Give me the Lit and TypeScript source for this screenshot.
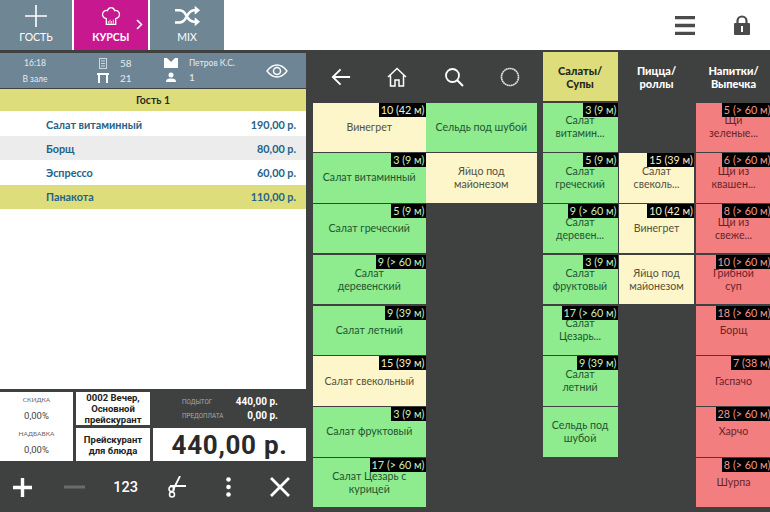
import { LitElement, html, css, svg } from "lit";
import { customElement } from "lit/decorators.js";

type Tone = "g" | "c" | "r";
type Tile = { t: string; b: string; k: Tone } | null;

const col1: Tile[] = [
  { t: "Винегрет", b: "10 (42 м)", k: "c" },
  { t: "Салат витаминный", b: "3 (9 м)", k: "g" },
  { t: "Салат гречеcкий", b: "5 (9 м)", k: "g" },
  { t: "Салат\nдеревенский", b: "9 (> 60 м)", k: "g" },
  { t: "Салат летний", b: "9 (39 м)", k: "g" },
  { t: "Салат свекольный", b: "15 (39 м)", k: "c" },
  { t: "Салат фруктовый", b: "3 (9 м)", k: "g" },
  { t: "Салат Цезарь с\nкурицей", b: "17 (> 60 м)", k: "g" },
];
const col2: Tile[] = [
  { t: "Сельдь под шубой", b: "", k: "g" },
  { t: "Яйцо под\nмайонезом", b: "", k: "c" },
];
const col3: Tile[] = [
  { t: "Салат\nвитамин...", b: "3 (9 м)", k: "g" },
  { t: "Салат\nгреческий", b: "5 (9 м)", k: "g" },
  { t: "Салат\nдеревен...", b: "9 (> 60 м)", k: "g" },
  { t: "Салат\nфруктовый", b: "3 (9 м)", k: "g" },
  { t: "Салат\nЦезарь...", b: "17 (> 60 м)", k: "g" },
  { t: "Салат\nлетний", b: "9 (39 м)", k: "g" },
  { t: "Сельдь под\nшубой", b: "", k: "g" },
];
const col4: Tile[] = [
  null,
  { t: "Салат\nсвеколь...", b: "15 (39 м)", k: "c" },
  { t: "Винегрет", b: "10 (42 м)", k: "c" },
  { t: "Яйцо под\nмайонезом", b: "", k: "c" },
];
const col5: Tile[] = [
  { t: "Щи\nзеленые...", b: "5 (> 60 м)", k: "r" },
  { t: "Щи из\nквашен...", b: "6 (> 60 м)", k: "r" },
  { t: "Щи из\nсвеже...", b: "8 (> 60 м)", k: "r" },
  { t: "Грибной\nсуп", b: "10 (> 60 м)", k: "r" },
  { t: "Борщ", b: "18 (> 60 м)", k: "r" },
  { t: "Гаспачо", b: "7 (38 м)", k: "r" },
  { t: "Харчо", b: "28 (> 60 м)", k: "r" },
  { t: "Шурпа", b: "8 (> 60 м)", k: "r" },
];
const orders = [
  { n: "Салат витаминный", p: "190,00 р.", c: "" },
  { n: "Борщ", p: "80,00 р.", c: "alt" },
  { n: "Эспрессо", p: "60,00 р.", c: "" },
  { n: "Панакота", p: "110,00 р.", c: "sel" },
];

const ico = {
  plusThin: svg`<path d="M11 0v22M0 11h22" stroke="#fff" stroke-width="1.600" fill="none"/>`,
  hat: svg`<path d="M8 19.500C3.500 18.500 1.500 15 2.500 11.500 3.500 8 7 6.500 9.500 7.500 11 4 13.500 3 15 3s4.500 1 5.500 4.500C23 6.500 26.500 8 27.500 11.500 28.500 15 26.500 18.500 22 19.500V28H8Z" fill="none" stroke="#fff" stroke-width="2"/><path d="M11 27v-4M13.500 27v-6M16 27v-4M18.500 27v-6" stroke="#fff" stroke-width="1.200"/>`,
  shuffle: svg`<path d="M1 7h6c5 0 7 3 9 7s5 8 10 8h3M1 23h6c5 0 7-3 9-7s5-9 10-9h3" fill="none" stroke="#fff" stroke-width="3.400"/><path d="M27 1l7 6-7 6zM27 16l7 6-7 6z" fill="#fff"/>`,
};

@customElement("app-root")
export class AppRoot extends LitElement {
  static styles = css`
    :host { display: block; width: 770px; height: 512px; overflow: hidden; background: #3f4040; font-family: "Lato", "Open Sans", sans-serif; }
    svg { display: block; }
    .top { height: 50px; background: #fff; display: flex; align-items: stretch; }
    .tab { background: #6f8794; color: #fff; display: flex; flex-direction: column; align-items: center; position: relative; font-size: 10.500px; }
    .tab.t1 { width: 72px; margin-right: 1.500px; }
    .tab.t2 { width: 74.500px; margin-right: 2px; }
    .tab.t3 { width: 74px; }
    .tab.on { background: #c8188f; font-weight: 700; }
    .tab .i { height: 31px; display: flex; align-items: center; justify-content: center; }
    .tab .chev { position: absolute; left: 62px; top: 19px; }
    .top .spacer { flex: 1; }
    .top .act { display: flex; align-items: center; justify-content: center; width: 57px; }
    .main { display: flex; margin-top: 2px; height: 460px; }
    .left { width: 306px; display: flex; flex-direction: column; }
    .hdr { height: 35px; margin-top: 1px; background: #6d8595; color: #e6ecef; font-size: 8.500px; display: flex; align-items: center; white-space: nowrap; }
    .hdr .time { width: 70px; display: flex; flex-direction: column; align-items: center; gap: 6px; }
    .hdr .st { display: grid; grid-template-columns: 18px auto; column-gap: 5px; row-gap: 3px; align-items: center; justify-items: start; margin-left: 27px; width: 35px; }
    .hdr .st.b { margin-left: 32px; column-gap: 11px; width: 73px; grid-template-columns: 14px auto; }
    .hdr .st svg { justify-self: center; margin-right: 6px; }
    .hdr .st.b svg { margin-right: 0; }
    .hdr .num { font-size: 10px; }
    .hdr .eye { margin-left: 29px; flex: none; }
    .guest { height: 22px; margin-top: 1px; background: #dedd7c; color: #2b2b1c; font-size: 10.500px; font-weight: 700; display: flex; align-items: center; justify-content: center; }
    .list { flex: 1; background: #fff; padding-top: 1px; }
    .row { height: 24.200px; display: flex; justify-content: space-between; align-items: center; padding: 0 10px 0 46px; font-size: 10.800px; font-weight: 700; color: #246388; }
    .row.alt { background: #ececec; }
    .row.sel { background: #dedd7c; }
    .sum { height: 69px; margin-top: 2px; display: flex; gap: 3px; padding: 1px 0; }
    .disc { width: 73px; background: #fff; display: flex; flex-direction: column; align-items: center; color: #444; }
    .disc .l { font-size: 6.500px; color: #666; margin-top: 4px; line-height: 8px; }
    .disc .v { font-size: 9.500px; font-family: "Roboto", sans-serif; margin-top: 6px; line-height: 12px; margin-bottom: 4px; }
    .prices { width: 74px; display: flex; flex-direction: column; gap: 3px; }
    .price { flex: 1; background: #fff; color: #222; font-family: "Roboto", sans-serif; font-weight: 700; font-size: 9.500px; line-height: 11px; text-align: center; display: flex; align-items: center; justify-content: center; }
    .tot { flex: 1; display: flex; flex-direction: column; gap: 3px; }
    .info { height: 33px; color: #fff; font-family: "Roboto", sans-serif; font-size: 10px; font-weight: 700; display: grid; grid-template-columns: 1fr auto; align-content: center; row-gap: 3px; padding: 0 28px 0 29px; align-items: center; }
    .info .k { font-size: 6.300px; font-weight: 400; color: #aaa; }
    .info .a { text-align: right; }
    .big { flex: 1; background: #fff; color: #2a2a2a; font-family: "Roboto", sans-serif; font-weight: 700; font-size: 26px; display: flex; align-items: center; justify-content: center; letter-spacing: .7px; }
    .foot { height: 50px; display: flex; justify-content: space-between; align-items: center; padding: 0 14px 0 11px; color: #fff; font-family: "Roboto", sans-serif; font-size: 14.500px; font-weight: 500; }
    .foot > * { width: 23px; display: flex; justify-content: center; }
    .board { flex: 1; display: flex; gap: 5.500px; padding-left: 7px; min-width: 0; }
    .g1 { width: 224px; display: flex; flex-direction: column; }
    .nav { height: 50.500px; display: flex; align-items: center; padding: 0 17px 0 18px; justify-content: space-between; flex: none; }
    .g1 .cols { display: grid; grid-template-columns: 112.500px 111.500px; }
    .col { display: flex; flex-direction: column; gap: 1.500px; min-width: 0; }
    .g2 { display: grid; grid-template-columns: 75px 75px 76px; column-gap: 1.500px; flex: none; }
    .cat { height: 49px; flex: none; font-weight: 900; color: #fff; font-size: 11px; line-height: 13px; text-align: center; display: flex; align-items: center; justify-content: center; }
    .cat.on { background: #dedd7c; color: #26261a; }
    .tile { height: 49.300px; flex: none; position: relative; display: flex; align-items: center; justify-content: center; text-align: center; font-size: 10.600px; line-height: 13px; white-space: pre-line; overflow: hidden; }
    .tile.g { background: #8eeb8e; color: #1f5530; }
    .tile.c { background: #fdf6cb; color: #55513a; }
    .tile.r { background: #f27e80; color: #672429; }
    .blank { background: transparent; }
    .badge { position: absolute; top: 0; right: 0; background: #000; color: #c6f0c2; font-size: 10.800px; line-height: 14px; padding: 0 1px 0 2px; white-space: nowrap; }
    .tile.c .badge { color: #f4eecb; }
    .tile.r .badge { color: #f09a90; }
  `;

  tile(t: Tile) {
    if (!t) return html`<div class="tile blank"></div>`;
    return html`<div class="tile ${t.k}">
      <span>${t.t}</span>
      ${t.b ? html`<span class="badge">${t.b}</span>` : null}
    </div>`;
  }

  render() {
    return html`
      <div class="top">
        <div class="tab t1"><div class="i"><svg width="22" height="22" viewBox="0 0 22 22">${ico.plusThin}</svg></div><span>ГОСТЬ</span></div>
        <div class="tab t2 on"><div class="i"><svg width="20" height="22" viewBox="0 0 30 31">${ico.hat}</svg></div><span>КУРСЫ</span>
          <svg class="chev" width="7" height="11" viewBox="0 0 7 11"><path d="M1 1l4.500 4.500L1 10" fill="none" stroke="#fff" stroke-width="1.600"/></svg></div>
        <div class="tab t3"><div class="i"><svg width="29" height="22" viewBox="0 0 35 29">${ico.shuffle}</svg></div><span>MIX</span></div>
        <div class="spacer"></div>
        <div class="act"><svg width="20" height="19" viewBox="0 0 20 19"><path d="M0 1.500h20M0 9.500h20M0 17.500h20" stroke="#4b4b4b" stroke-width="3.400"/></svg></div>
        <div class="act"><svg width="16" height="20" viewBox="0 0 16 20"><path d="M3.500 9V6a4.500 4.500 0 0 1 9 0v3" fill="none" stroke="#4b4b4b" stroke-width="2.200"/><rect y="8" width="16" height="12" rx="1" fill="#4b4b4b"/><rect x="7" y="11" width="2" height="6" fill="#fff"/></svg></div>
      </div>
      <div class="main">
        <div class="left">
          <div class="hdr">
            <div class="time"><span>16:18</span><span>В зале</span></div>
            <div class="st">
              <svg width="8" height="11" viewBox="0 0 8 11"><rect x=".5" y=".5" width="7" height="10" fill="none" stroke="#cfd8dc"/><path d="M2 3h4M2 5.500h4M2 8h4" stroke="#cfd8dc"/></svg><span class="num">58</span>
              <svg width="12" height="10" viewBox="0 0 12 10"><path d="M0 1h12M2 1v9M10 1v9" stroke="#fff" stroke-width="2" fill="none"/></svg><span class="num">21</span>
            </div>
            <div class="st b">
              <svg width="14" height="10" viewBox="0 0 14 10"><path d="M0 0h3l4 4 4-4h3v10H0z" fill="#fff"/></svg><span>Петров К.С.</span>
              <svg width="10" height="10" viewBox="0 0 10 10"><circle cx="5" cy="3" r="2.500" fill="#fff"/><path d="M0 10c0-3 2-3.500 5-3.500s5 .5 5 3.500z" fill="#fff"/></svg><span class="num">1</span>
            </div>
            <svg class="eye" width="22" height="14" viewBox="0 0 22 14"><path d="M1 7c3-4 6.500-6 10-6s7 2 10 6c-3 4-6.500 6-10 6S4 11 1 7z" fill="none" stroke="#fff" stroke-width="1.300"/><circle cx="11" cy="7" r="3.500" fill="none" stroke="#fff" stroke-width="1.500"/></svg>
          </div>
          <div class="guest">Гость 1</div>
          <div class="list">
            ${orders.map((o) => html`<div class="row ${o.c}"><span>${o.n}</span><span>${o.p}</span></div>`)}
          </div>
          <div class="sum">
            <div class="disc"><span class="l">СКИДКА</span><span class="v">0,00%</span><span class="l">НАДБАВКА</span><span class="v">0,00%</span></div>
            <div class="prices">
              <div class="price">0002 Вечер,<br />Основной<br />прейскурант</div>
              <div class="price">Прейскурант<br />для блюда</div>
            </div>
            <div class="tot">
              <div class="info"><span class="k">ПОДЫТОГ</span><span class="a">440,00 р.</span><span class="k">ПРЕДОПЛАТА</span><span class="a">0,00 р.</span></div>
              <div class="big">440,00 р.</div>
            </div>
          </div>
          <div class="foot">
            <span><svg width="21" height="21" viewBox="0 0 21 21"><path d="M10.500 1v19M1 10.500h19" stroke="#fff" stroke-width="3.400"/></svg></span>
            <span><svg width="21" height="4" viewBox="0 0 21 4"><path d="M0 2h21" stroke="#6b6b6b" stroke-width="3"/></svg></span>
            <span>123</span>
            <span><svg width="20" height="22" viewBox="0 0 20 22"><path d="M13 0L6 14M19 10H3" stroke="#fff" stroke-width="1.800" fill="none"/><circle cx="4.500" cy="13" r="2.500" fill="none" stroke="#fff" stroke-width="1.500"/><circle cx="5" cy="18.500" r="2.500" fill="none" stroke="#fff" stroke-width="1.500"/></svg></span>
            <span><svg width="5" height="20" viewBox="0 0 5 20"><circle cx="2.500" cy="2.500" r="2.300" fill="#fff"/><circle cx="2.500" cy="10" r="2.300" fill="#fff"/><circle cx="2.500" cy="17.500" r="2.300" fill="#fff"/></svg></span>
            <span><svg width="20" height="20" viewBox="0 0 20 20"><path d="M1 1l18 18M19 1L1 19" stroke="#fff" stroke-width="2.800"/></svg></span>
          </div>
        </div>
        <div class="board">
          <div class="g1">
            <div class="nav">
              <svg width="20" height="20" viewBox="0 0 22 20"><path d="M21 10H2M10.500 1.500L2 10l8.500 8.500" fill="none" stroke="#fff" stroke-width="2"/></svg>
              <svg width="20" height="20" viewBox="0 0 20 20"><path d="M1 10L10 1.500 19 10M3.500 8.500V19H8v-6h4v6h4.500V8.500" fill="none" stroke="#fff" stroke-width="1.500"/></svg>
              <svg width="20" height="20" viewBox="0 0 20 20"><circle cx="8.500" cy="8.500" r="6.500" fill="none" stroke="#fff" stroke-width="1.800"/><path d="M13 13l6 6" stroke="#fff" stroke-width="2"/></svg>
              <svg width="20" height="20" viewBox="0 0 20 20"><circle cx="10" cy="10" r="8.500" fill="none" stroke="#e8e8e8" stroke-width="1.600" stroke-dasharray="1.700 .4"/></svg>
            </div>
            <div class="cols">
              <div class="col">${col1.map((t) => this.tile(t))}</div>
              <div class="col">${col2.map((t) => this.tile(t))}</div>
            </div>
          </div>
          <div class="g2">
            <div class="col"><div class="cat on">Салаты/<br />Супы</div>${col3.map((t) => this.tile(t))}</div>
            <div class="col"><div class="cat">Пицца/<br />роллы</div>${col4.map((t) => this.tile(t))}</div>
            <div class="col"><div class="cat">Напитки/<br />Выпечка</div>${col5.map((t) => this.tile(t))}</div>
          </div>
        </div>
      </div>
    `;
  }
}
